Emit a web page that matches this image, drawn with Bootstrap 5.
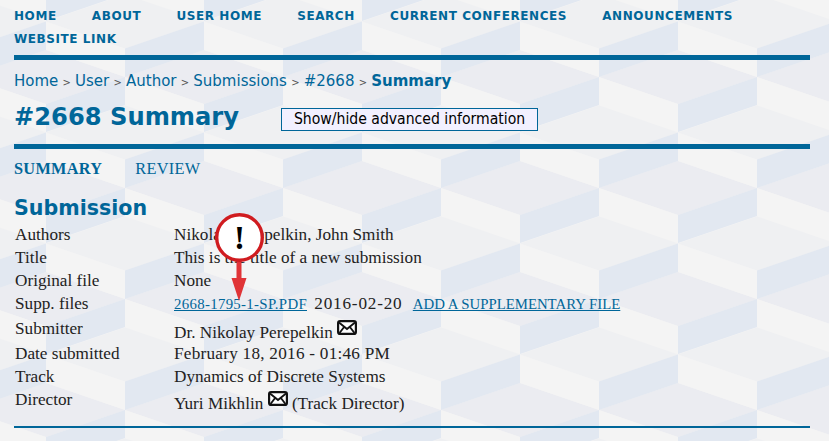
<!DOCTYPE html>
<html lang="en">
<head>
  <meta charset="UTF-8" />
  <meta name="viewport" content="width=device-width, initial-scale=1" />
  <title>#2668 Summary</title>
  <link href="https://cdn.jsdelivr.net/npm/bootstrap@5.3.0/dist/css/bootstrap.min.css" rel="stylesheet" />
  <style>
    body {
      background-color: #f0f0f3;
      background-image: url("data:image/svg+xml,%3Csvg xmlns='http://www.w3.org/2000/svg' width='158' height='111'%3E%3Crect width='158' height='111' fill='%23f4f4f5'/%3E%3Cpath fill='%23ebecf1' d='M0 27 79 0 158 27 79 54z'/%3E%3Cpath fill='%23f4f4f4' d='M0 27 79 54V82L0 55z'/%3E%3Cpath fill='%23e2e8f1' d='M158 27 79 54V82L158 55z'/%3E%3Cpath fill='%23eff0f2' d='M79 82.5 158 55.5 237 82.5 158 109.5z'/%3E%3Cpath fill='%23eff0f2' d='M-79 82.5 0 55.5 79 82.5 0 109.5z'/%3E%3Cpath fill='%23f4f4f4' d='M79 82.5 158 109.5V138L79 111z'/%3E%3Cpath fill='%23e2e8f1' d='M79 82.5 0 109.5V138L79 111z'/%3E%3Cpath fill='%23f4f4f4' d='M-79 -28.5 0 -1.5V27L-79 0z'/%3E%3Cpath fill='%23e2e8f1' d='M79 -28.5 0 -1.5V27L79 0z'/%3E%3Cpath fill='%23f4f4f4' d='M79 -28.5 158 -1.5V27L79 0z'/%3E%3C/svg%3E");
      background-position: 125px 50px;
      color: #222;
      font-family: "Liberation Serif", serif;
      font-size: 17.2px;
      line-height: 23px;
    }
    a { color: #006699; }
    .page-wrap { position: relative; width: 796px; margin-left: 14px; height: 441px; overflow: hidden; }
    .top-nav { font-family: "DejaVu Sans", sans-serif; font-weight: 700; font-size: 12px; letter-spacing: .57px; line-height: 23px; padding-top: 5px; column-gap: 35.2px; }
    .top-nav a { text-decoration: none; }
    .thick-rule { height: 5px; background: #006699; }
    .crumbs { font-family: "DejaVu Sans", sans-serif; font-size: 15px; line-height: 20px; margin-top: 11px; color: #555; }
    .crumbs a { text-decoration: none; }
    .crumbs b { color: #006699; }
    .crumbs i { font-style: normal; font-size: 10px; margin: 0 4.2px; }
    .head-row { height: 48px; margin-top: 3px; padding-top: 6px; }
    .page-title { font-family: "DejaVu Sans", sans-serif; font-weight: 700; font-size: 24.2px; color: #006699; margin: 0; line-height: 30px; }
    .adv-btn { width: 257px; height: 23px; margin: 6px 0 0 42px; padding: 0; border: 1px solid #006699; background: #f2f0ff; color: #000; font-family: "DejaVu Sans Condensed", "DejaVu Sans", sans-serif; font-size: 15.6px; line-height: 21px; }
    .sub-tabs { margin-top: 8px; height: 23px; gap: 33px; font-size: 16.3px; letter-spacing: .3px; }
    .sub-tabs a { text-decoration: none; }
    .sec-title { font-family: "DejaVu Sans", sans-serif; font-weight: 700; font-size: 20.6px; color: #006699; line-height: 26px; margin: 15px 0 2px; }
    .info-row { display: flex; height: 23px; }
    .info-row.tall { height: 25px; }
    .info-label { width: 160px; flex: none; padding-left: 1px; }
    .with-icon .info-value { padding-top: 3px; }
    .wide-digits { letter-spacing: .25px; }
    .supp-link { font-size: 14.8px; }
    .file-link { letter-spacing: .33px; }
    .supp-date { margin: 0 6px 0 3px; letter-spacing: .8px; }
    .mail-ico { display: inline-block; width: 20px; height: 15px; vertical-align: 3px; }
    .thin-rule { height: 2px; background: #006699; margin-top: 13px; }
    .callout { position: absolute; left: 198px; top: 210px; width: 54px; height: 94px; }
  </style>
</head>
<body>
  <div class="page-wrap">
    <nav class="top-nav d-flex flex-wrap">
      <a href="#">HOME</a>
      <a href="#">ABOUT</a>
      <a href="#">USER HOME</a>
      <a href="#">SEARCH</a>
      <a href="#">CURRENT CONFERENCES</a>
      <a href="#">ANNOUNCEMENTS</a>
      <a href="#">WEBSITE LINK</a>
    </nav>
    <div class="thick-rule mt-1"></div>

    <div class="crumbs">
      <a href="#">Home</a><i>&gt;</i><a href="#">User</a><i>&gt;</i><a href="#">Author</a><i>&gt;</i><a href="#">Submissions</a><i>&gt;</i><a href="#">#2668</a><i>&gt;</i><b>Summary</b>
    </div>

    <div class="head-row d-flex align-items-start">
      <h2 class="page-title">#2668 Summary</h2>
      <button type="button" class="adv-btn">Show/hide advanced information</button>
    </div>
    <div class="thick-rule"></div>

    <div class="sub-tabs d-flex">
      <a href="#"><b>SUMMARY</b></a>
      <a href="#">REVIEW</a>
    </div>

    <h3 class="sec-title">Submission</h3>
    <div class="info-row"><div class="info-label">Authors</div><div class="info-value">Nikolay Perepelkin, John Smith</div></div>
    <div class="info-row"><div class="info-label">Title</div><div class="info-value">This is the title of a new submission</div></div>
    <div class="info-row"><div class="info-label">Original file</div><div class="info-value">None</div></div>
    <div class="info-row tall"><div class="info-label">Supp. files</div><div class="info-value"><a href="#" class="supp-link file-link">2668-1795-1-SP.PDF</a> <span class="supp-date">2016-02-20</span> <a href="#" class="supp-link">ADD A SUPPLEMENTARY FILE</a></div></div>
    <div class="info-row tall with-icon"><div class="info-label">Submitter</div><div class="info-value">Dr. Nikolay Perepelkin <svg class="mail-ico" viewBox="0 0 20 15"><rect x="1.1" y="1.1" width="17.8" height="12.8" rx="2" fill="#fff" stroke="#111" stroke-width="2.2"/><path d="M2 2.5 10 9 18 2.5M2.5 13 7.5 6.5M17.5 13 12.5 6.5" fill="none" stroke="#111" stroke-width="1.9"/></svg></div></div>
    <div class="info-row"><div class="info-label">Date submitted</div><div class="info-value wide-digits">February 18, 2016 - 01:46 PM</div></div>
    <div class="info-row"><div class="info-label">Track</div><div class="info-value">Dynamics of Discrete Systems</div></div>
    <div class="info-row tall with-icon"><div class="info-label">Director</div><div class="info-value">Yuri Mikhlin <svg class="mail-ico" viewBox="0 0 20 15"><rect x="1.1" y="1.1" width="17.8" height="12.8" rx="2" fill="#fff" stroke="#111" stroke-width="2.2"/><path d="M2 2.5 10 9 18 2.5M2.5 13 7.5 6.5M17.5 13 12.5 6.5" fill="none" stroke="#111" stroke-width="1.9"/></svg> (Track Director)</div></div>
    <div class="thin-rule"></div>

    <svg class="callout" viewBox="0 0 54 94">
      <path d="M24.5 50H29.5V68H34.5L27 91 19.5 68H24.5z" fill="#e03437"/>
      <circle cx="27.5" cy="27.5" r="22.8" fill="#fff" stroke="#d01c20" stroke-width="3.4"/>
      <text x="27.5" y="39" text-anchor="middle" font-family="Liberation Serif, serif" font-weight="700" font-size="33" fill="#000">!</text>
    </svg>
  </div>
  <script src="https://cdn.jsdelivr.net/npm/bootstrap@5.3.0/dist/js/bootstrap.bundle.min.js"></script>
</body>
</html>
